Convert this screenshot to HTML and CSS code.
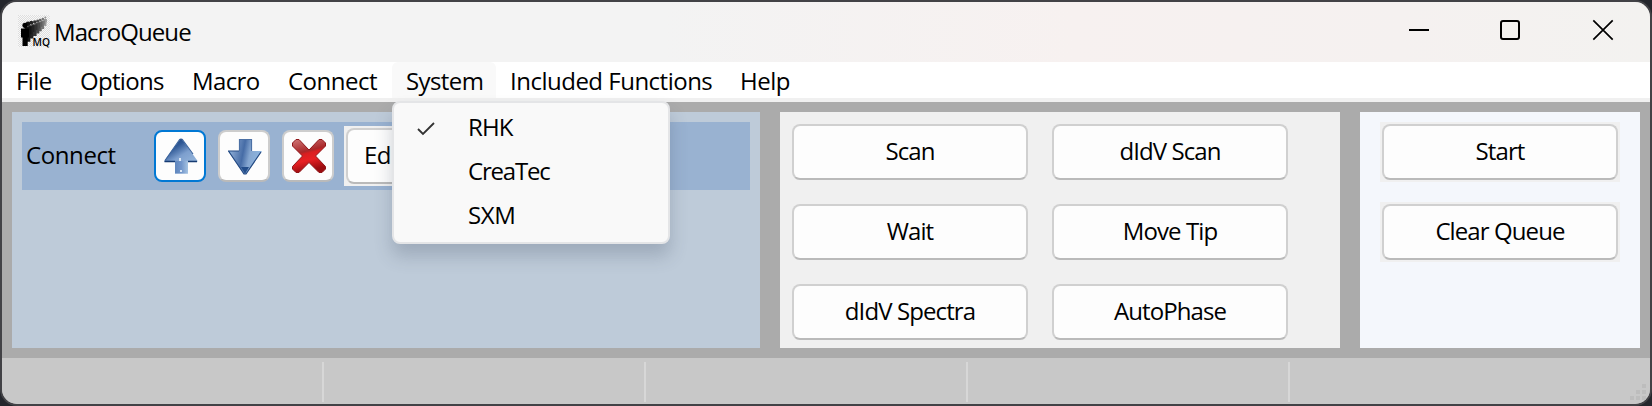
FILE: index.html
```html
<!DOCTYPE html>
<html lang="en">
<head>
<meta charset="utf-8">
<title>MacroQueue</title>
<link rel="stylesheet" href="styles.css">
</head>
<body>
<div class="window">
  <header class="titlebar">
    <svg class="app-icon" width="33" height="34" viewBox="0 0 33 34">
      <defs>
        <pattern id="checker" width="2" height="2" patternUnits="userSpaceOnUse">
          <rect width="2" height="2" fill="#f8f8f8"/><rect width="1" height="1" fill="#dedede"/><rect x="1" y="1" width="1" height="1" fill="#dedede"/>
        </pattern>
        <g id="person"><circle cx="7" cy="10.3" r="2.6"/><path d="M3 13.500h8v9H9.700V31H4.500v-8.500H3z"/></g>
      </defs>
      <rect width="32" height="32" fill="url(#checker)"/>
      <use href="#person" fill="#999" transform="translate(24.500 -1.500) scale(.4)"/>
      <use href="#person" fill="#777" transform="translate(21.500 -1) scale(.48)"/>
      <use href="#person" fill="#606060" transform="translate(18.500 -.5) scale(.54)"/>
      <use href="#person" fill="#484848" transform="translate(15.500 0) scale(.6)"/>
      <use href="#person" fill="#333" transform="translate(12 0) scale(.68)"/>
      <use href="#person" fill="#222" transform="translate(8 0) scale(.76)"/>
      <use href="#person" fill="#141414" transform="translate(4 0) scale(.86)"/>
      <use href="#person" fill="#000"/>
      <text x="14.500" y="31" class="icon-label" textLength="17.500" lengthAdjust="spacingAndGlyphs">MQ</text>
    </svg>
    <span class="title">MacroQueue</span>
    <svg class="controls" width="206" height="24" viewBox="0 0 206 24" fill="none" stroke="#000" stroke-width="2">
      <path d="M1 12h20"/>
      <rect x="93" y="3" width="18" height="18" rx="2"/>
      <path d="M185.300 2.300l19.400 19.400M204.700 2.300l-19.400 19.400" stroke-width="1.700"/>
    </svg>
  </header>
  <nav class="menubar">
    <span class="menu file">File</span>
    <span class="menu options">Options</span>
    <span class="menu macro">Macro</span>
    <span class="menu connect">Connect</span>
    <span class="menu system">System</span>
    <span class="menu functions">Included Functions</span>
    <span class="menu help">Help</span>
  </nav>
  <main class="workspace">
    <section class="queue">
      <div class="queue-row">
        <span class="queue-name">Connect</span>
        <div class="tools">
          <span class="tool focused">
            <svg width="36" height="38" viewBox="0 0 36 38">
              <defs>
                <linearGradient id="steel" x1="0.200" y1="0" x2=".8" y2="1"><stop offset="0" stop-color="#173c75"/><stop offset=".25" stop-color="#315a97"/><stop offset=".5" stop-color="#7d9fce"/><stop offset=".75" stop-color="#8fb0d8"/><stop offset="1" stop-color="#a8c2df"/></linearGradient>
                <linearGradient id="stem" x1="0" y1="0" x2="1" y2="0"><stop offset="0" stop-color="#5f86bd"/><stop offset=".5" stop-color="#7296cb"/><stop offset="1" stop-color="#a5c3e2"/></linearGradient>
                <linearGradient id="steelDown" x1="0" y1="0" x2="1" y2=".2"><stop offset="0" stop-color="#9bd0fb"/><stop offset=".2" stop-color="#7f9fcb"/><stop offset=".5" stop-color="#466ca6"/><stop offset=".7" stop-color="#85a6d0"/><stop offset="1" stop-color="#8db5df"/></linearGradient>
              </defs>
              <path d="M18 1L35 24.500H25V36.500H12V24.500H1z" fill="url(#steel)"/>
              <path d="M1.500 24.500H12M25 24.500H34" stroke="#163b72" stroke-width="1.500"/>
              <path d="M17 2L2 23.500M19 2L30 17" stroke="#3b649d" stroke-width="1.200"/>
              <path d="M12 24h13v12.500H12z" fill="url(#stem)"/>
              <path d="M16 21h2v3h-2zM17 33h2v2h-2z" fill="#dce8f5"/>
            </svg>
          </span>
          <span class="tool">
            <svg width="36" height="38" viewBox="0 0 36 38">
              <path d="M12 2H25V14H35L19 37H17L1 14H12z" fill="url(#steelDown)"/>
              <path d="M12.500 14V2.500H24.500V14" fill="none" stroke="#4b70a5" stroke-width="1.200"/>
              <path d="M1.500 14L17 37H19L34 15M1 14H12" fill="none" stroke="#244a83" stroke-width="1.200"/>
              <path d="M14 30h8l-4 7z" fill="#244e8b"/>
            </svg>
          </span>
          <span class="tool">
            <svg width="36" height="38" viewBox="0 0 36 38">
              <defs><linearGradient id="ruby" x1="0" y1="0" x2=".25" y2="1"><stop offset="0" stop-color="#cf7777"/><stop offset=".43" stop-color="#a92729"/><stop offset=".5" stop-color="#d91e20"/><stop offset=".7" stop-color="#e82023"/><stop offset="1" stop-color="#9b0d10"/></linearGradient></defs>
              <path d="M5 2.500H8L18 13L28 2.500H31L34.500 6V9L24.500 19L34.500 29.500V32L31 35.500H28L18 25.500L8 35.500H5L1.500 32V29.500L11.500 19L1.500 9V6z" fill="url(#ruby)" stroke="#8f1518"/>
            </svg>
          </span>
          <span class="plate edit-plate"><span class="button edit">Edit</span></span>
        </div>
      </div>
    </section>
    <section class="functions-panel">
      <span class="button">Scan</span>
      <span class="button">dIdV Scan</span>
      <span class="button">Wait</span>
      <span class="button">Move Tip</span>
      <span class="button">dIdV Spectra</span>
      <span class="button">AutoPhase</span>
    </section>
    <section class="run-panel">
      <span class="plate"><span class="button">Start</span></span>
      <span class="plate"><span class="button">Clear Queue</span></span>
    </section>
  </main>
  <footer class="statusbar">
    <i class="cell"></i><i class="cell"></i><i class="cell"></i><i class="cell"></i>
    <svg class="grip" width="16" height="16" viewBox="0 0 16 16" fill="#bdbdbd"><path d="M12 0h4v4h-4zM6 6h4v4H6zM12 6h4v4h-4zM0 12h4v4H0zM6 12h4v4H6zM12 12h4v4h-4z"/></svg>
  </footer>
  <div class="dropdown">
    <div class="option"><svg class="check" width="18" height="14" viewBox="0 0 18 14" fill="none" stroke="#333" stroke-width="1.800"><path d="M1 7l5 5L17 1"/></svg><span>RHK</span></div>
    <div class="option createc"><span>CreaTec</span></div>
    <div class="option sxm"><span>SXM</span></div>
  </div>
</div>
</body>
</html>
```
FILE: styles.css
```css
* { box-sizing: border-box; }
body {
  margin: 0;
  width: 1652px;
  height: 406px;
  overflow: hidden;
  background: #24262c;
  font: 24px/32px "Open Sans", "Noto Sans", sans-serif;
  letter-spacing: -0.9px;
  color: #000;
  white-space: nowrap;
}
.window {
  position: relative;
  width: 1652px;
  height: 406px;
  border: 2px solid #424246;
  border-radius: 17px;
  overflow: hidden;
  display: flex;
  flex-direction: column;
  background: #ababab;
}
.titlebar {
  height: 60px;
  flex: none;
  display: flex;
  align-items: flex-start;
  background: linear-gradient(90deg, #f3f3f3 40%, #f7f1f0 65%, #f5f1f0 85%, #f3f2f0);
}
.app-icon { margin: 13px 0 0 16px; overflow: visible; }
.icon-label { font: 600 10px/1 "Open Sans", sans-serif; letter-spacing: 0; }
.title { margin: 14px 0 0 3px; letter-spacing: -0.9px; }
.controls { margin: 16px 36px 0 auto; }
.menubar {
  height: 40px;
  flex: none;
  display: flex;
  background: #fff;
  border-bottom: 4px solid #f0f0f0;
}
.menu { height: 36px; line-height: 38px; padding-left: 14px; flex: none; letter-spacing: -0.5px; }
.file { width: 63px; letter-spacing: -0.6px; }
.options { width: 114px; letter-spacing: -0.7px; padding-left: 15px; }
.macro { width: 96px; padding-left: 13px; letter-spacing: -0.6px; }
.connect { width: 117px; padding-left: 13px; }
.system { width: 104px; background: #f9f9f9; border-radius: 6px 6px 0 0; padding-left: 14px; letter-spacing: -0.6px; }
.functions { width: 230px; }
.help { width: 77px; }
.workspace {
  height: 256px;
  flex: none;
  padding: 10px;
  display: grid;
  grid-template-columns: 748px 560px 280px;
  grid-template-rows: 236px;
  gap: 20px;
}
.queue { background: #becbd9; padding: 10px; }
.queue-row {
  height: 68px;
  background: #99b2d1;
  display: flex;
  padding-top: 4px;
}
.queue-name { width: 132px; padding-left: 4px; line-height: 57px; letter-spacing: -0.4px; }
.tools { display: flex; gap: 12px; }
.tool {
  width: 52px;
  height: 52px;
  margin-top: 4px;
  padding-left: 2px;
  border: 2px solid #cdcdcd;
  border-bottom-color: #bababa;
  border-radius: 8px;
  background: #fdfdfd;
  display: flex;
  align-items: center;
  justify-content: center;
}
.focused { border-color: #0078d4; }
.plate { background: #f0f0f0; padding: 2px; height: 60px; display: block; }
.edit-plate { width: 110px; margin-left: -2px; }
.button {
  display: block;
  height: 56px;
  border: 2px solid #d0d0d0;
  border-bottom-color: #bababa;
  border-radius: 8px;
  background: #fdfdfd;
  text-align: center;
  line-height: 50px;
}
.edit { text-align: left; padding-left: 16px; letter-spacing: -0.5px; }
.functions-panel {
  background: #f0f0f0;
  padding: 12px 12px 0;
  display: grid;
  grid-template-columns: 236px 236px;
  grid-auto-rows: 56px;
  gap: 24px;
}
.run-panel {
  background: #f4f7fc;
  padding: 10px 20px;
  display: flex;
  flex-direction: column;
  gap: 20px;
}
.statusbar { flex: 1; background: #c8c8c8; display: flex; padding-top: 4px; }
.cell { width: 322px; height: 40px; border-right: 2px solid #d7d7d7; flex: none; }
.grip { margin: 22px 4px 0 auto; }
.dropdown {
  position: absolute;
  left: 390px;
  top: 99px;
  width: 278px;
  height: 143px;
  padding: 2px 0;
  border: 2px solid #e4e5e7;
  border-radius: 8px;
  background: #f9f9f9;
  box-shadow: 0 12px 18px rgba(50, 65, 85, .23);
}
.option { height: 44px; display: flex; align-items: center; padding-left: 74px; }
.check { margin: 4px 33px 0 -51px; }
.createc { letter-spacing: -1.2px; }
.sxm { letter-spacing: -0.4px; }
```
